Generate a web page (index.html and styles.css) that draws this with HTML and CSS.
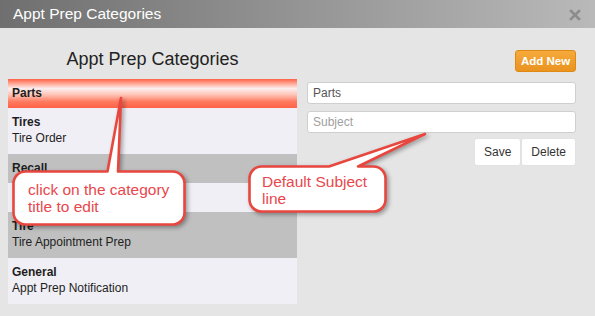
FILE: index.html
```html
<!DOCTYPE html>
<html>
<head>
<meta charset="utf-8">
<link rel="stylesheet" href="styles.css">
</head>
<body>
<div class="dialog">
  <div class="titlebar">
    <span class="title">Appt Prep Categories</span>
    <svg class="close" width="12" height="12" viewBox="0 0 12 12"><path d="M2 2 L10 10 M10 2 L2 10" stroke="#8c8c8c" stroke-width="2.6" stroke-linecap="square"/></svg>
  </div>
  <div class="main">
    <div class="left">
      <h2 class="heading">Appt Prep Categories</h2>
      <div class="list">
        <div class="row selected"><div class="r-title">Parts</div></div>
        <div class="row light"><div class="r-title">Tires</div><div class="r-sub">Tire Order</div></div>
        <div class="row gray"><div class="r-title">Recall</div></div>
        <div class="row light"><div class="r-title">&nbsp;</div></div>
        <div class="row gray"><div class="r-title">Tire</div><div class="r-sub">Tire Appointment Prep</div></div>
        <div class="row light"><div class="r-title">General</div><div class="r-sub">Appt Prep Notification</div></div>
      </div>
    </div>
    <div class="right">
      <div class="toolbar"><button class="btn-add">Add New</button></div>
      <input class="field" type="text" value="Parts">
      <input class="field field-2" type="text" placeholder="Subject">
      <div class="actions">
        <button class="btn">Save</button><button class="btn">Delete</button>
      </div>
    </div>
  </div>
  <div class="overlay">
    <svg class="shapes" width="595" height="316" viewBox="0 0 595 316">
      <path d="M25.5 171.5 H107.5 L121 98 L118 171.5 H172.5 A12 12 0 0 1 184.5 183.5 V212.5 A12 12 0 0 1 172.5 224.5 H25.5 A12 12 0 0 1 13.5 212.5 V183.5 A12 12 0 0 1 25.5 171.5 Z" fill="#fff" stroke="#e8473f" stroke-width="2.6" stroke-linejoin="round"/>
      <path d="M261.5 166.5 H329 L425 134 L358 166.5 H373.5 A12 12 0 0 1 385.5 178.5 V199.5 A12 12 0 0 1 373.5 211.5 H261.5 A12 12 0 0 1 249.5 199.5 V178.5 A12 12 0 0 1 261.5 166.5 Z" fill="#fff" stroke="#e8473f" stroke-width="2.6" stroke-linejoin="round"/>
    </svg>
    <div class="note note-1">click on the category<br>title to edit</div>
    <div class="note note-2">Default Subject<br>line</div>
  </div>
</div>
</body>
</html>
```
FILE: styles.css
```css
* { box-sizing: border-box; }
html, body { margin: 0; padding: 0; }
body {
  width: 595px;
  height: 316px;
  background: #e5e5e5;
  font-family: "Liberation Sans", Arial, sans-serif;
  overflow: hidden;
}
.dialog { position: relative; width: 595px; height: 316px; }
.titlebar {
  height: 28px;
  background: linear-gradient(to right, #6f6f6f, #b9b9b9);
  display: flex;
  align-items: center;
  justify-content: space-between;
  padding: 0 13px 0 13px;
}
.title { color: #fff; font-size: 15.5px; line-height: 18px; }
.close { margin-top: 2px; margin-right: 1px; }
.main {
  display: grid;
  grid-template-columns: 289px 269px;
  column-gap: 10px;
  padding: 0 8px;
}
.heading {
  margin: 0;
  padding: 20px 0 9px;
  font-weight: normal;
  font-size: 18px;
  line-height: 22px;
  color: #222;
  text-align: center;
}
.list { display: flex; flex-direction: column; }
.row { padding: 6px 4px 7px; color: #1e1e1e; font-size: 12px; }
.r-title { font-weight: bold; line-height: 16px; }
.r-sub { line-height: 17px; }
.light { background: #f0eff5; }
.gray { background: #c0c0c0; }
.selected {
  background: linear-gradient(to bottom, #ff6247 0%, #ffb0a0 18%, #fbeeee 33%, #ffc2b4 55%, #ff7a60 78%, #ff6247 100%);
}
.right { display: flex; flex-direction: column; }
.toolbar { display: flex; justify-content: flex-end; padding-top: 22px; margin-bottom: 10px; }
.btn-add {
  height: 22px;
  width: 61px;
  padding: 0;
  border: 1px solid #de8a14;
  border-radius: 3px;
  background: linear-gradient(to bottom, #f6aa3c, #ea9320);
  color: #fff;
  font-family: "Liberation Sans", Arial, sans-serif;
  font-weight: bold;
  font-size: 11.5px;
}
.field {
  height: 22px;
  border: 1px solid #cfcfcf;
  border-radius: 3px;
  background: #fff;
  padding: 0 5px;
  font-family: "Liberation Sans", Arial, sans-serif;
  font-size: 12px;
  color: #555;
  outline: none;
}
.field::placeholder { color: #a0a0a0; }
.field-2 { margin-top: 7px; }
.actions { display: flex; justify-content: flex-end; margin-top: 5px; }
.btn {
  height: 28px;
  padding: 0 9px;
  border: 1px solid #e2e2e2;
  border-radius: 3px;
  background: #fff;
  color: #333;
  font-family: "Liberation Sans", Arial, sans-serif;
  font-size: 12px;
}
.overlay { position: absolute; left: 0; top: 0; width: 595px; height: 316px; pointer-events: none; }
.shapes { position: absolute; left: 0; top: 0; filter: drop-shadow(2px 2px 2px rgba(0,0,0,0.35)); }
.note {
  position: absolute;
  color: #e8474c;
  font-size: 15.5px;
  line-height: 17px;
  white-space: nowrap;
}
.note-1 { left: 28px; top: 181px; }
.note-2 { left: 262px; top: 173px; }
```
